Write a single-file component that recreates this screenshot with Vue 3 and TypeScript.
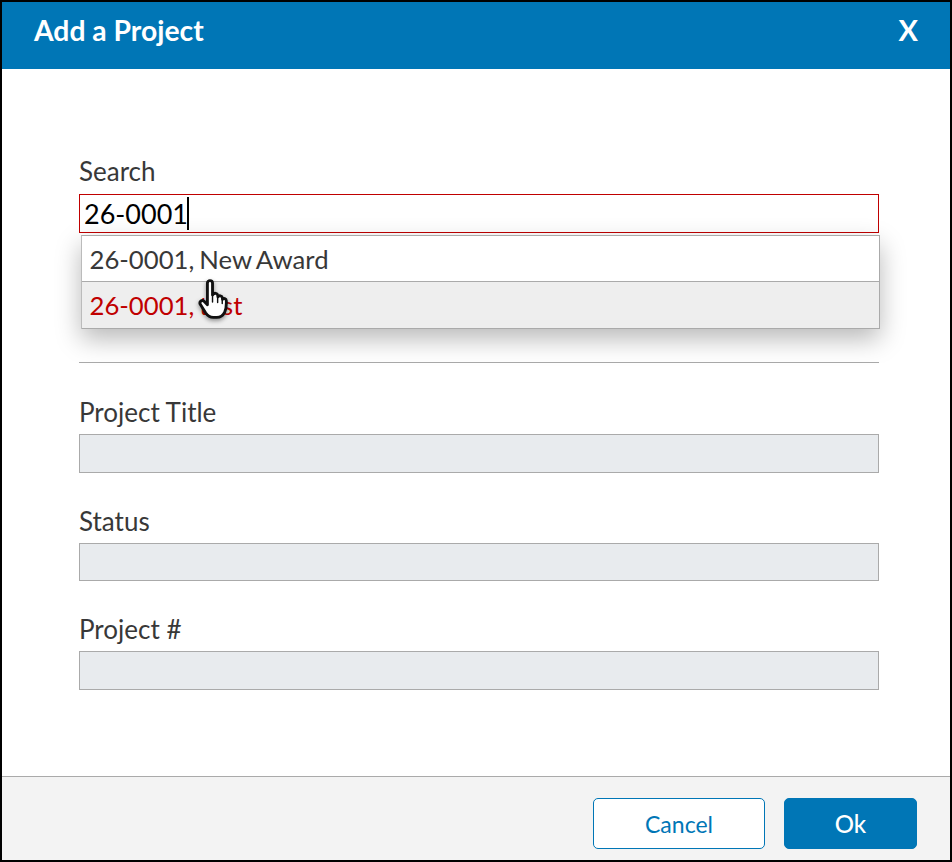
<script setup lang="ts">
const fields: string[] = ['Project Title', 'Status', 'Project #']
</script>

<template>
  <div class="dialog">
    <header class="head">
      <h1 class="title">Add a Project</h1>
      <span class="close">X</span>
    </header>
    <main class="body">
      <section class="search">
        <label class="label">Search</label>
        <div class="input">26-0001<span class="caret"></span></div>
        <ul class="menu">
          <li class="item">26-0001, New Award</li>
          <li class="item active">26-0001, test</li>
        </ul>
        <svg class="hand" viewBox="0 0 32 44" width="33" height="45">
          <path d="M12 5c0-3.200 5-3.200 5 0v11.500l.5-.5c1.200-1.700 4.300-1.200 4.600 1l.2 1.400c.9-1.600 4-1.200 4.300.9l.2 1.500c1-1.300 3.600-.7 3.700 1.400.2 4.300-.1 8.300-1.700 11.400-1.500 3-3.800 4.900-7.600 4.900h-3.500c-3.500 0-5.500-1.500-7.500-4.500l-5-8c-1.700-2.500 1.500-5.300 3.500-3.200l3.300 3.400z" fill="#fff" stroke="#111" stroke-width="2.800" stroke-linejoin="round" />
          <path d="M17 16.500v7M22 18v6M26.500 20v5" fill="none" stroke="#111" stroke-width="1.400" stroke-linecap="round" />
        </svg>
      </section>
      <hr class="rule" />
      <section v-for="f in fields" :key="f" class="field">
        <label class="label">{{ f }}</label>
        <div class="input disabled"></div>
      </section>
    </main>
    <footer class="foot">
      <button class="btn cancel" type="button">Cancel</button>
      <button class="btn ok" type="button">Ok</button>
    </footer>
  </div>
</template>

<style>
html, body { margin: 0; background: #fff; }
</style>

<style scoped>
.dialog {
  box-sizing: border-box;
  width: 952px;
  height: 862px;
  border: 2px solid #000;
  display: flex;
  flex-direction: column;
  font-family: Lato, "Open Sans", sans-serif;
  color: #383838;
  background: #fff;
}
.head {
  flex: none;
  box-sizing: border-box;
  height: 67px;
  background: #0076b6;
  color: #fff;
  display: flex;
  align-items: center;
  justify-content: space-between;
  padding: 0 32px 12px;
}
.title {
  margin: 0;
  font-size: 28.3px;
  font-weight: 700;
}
.close {
  font-size: 29px;
  font-weight: 700;
}
.body {
  flex: 1;
  padding: 86px 71px 0 77px;
}
.search {
  position: relative;
  height: 207px;
}
.label {
  display: block;
  height: 39px;
  font-size: 26px;
  line-height: 33px;
}
.field .label {
  line-height: 34px;
}
.input {
  box-sizing: border-box;
  height: 39px;
  border: 1px solid #c00000;
  background: #fff;
  color: #000;
  font-size: 27px;
  line-height: 39px;
  padding-left: 4px;
  display: flex;
  align-items: center;
}
.caret {
  width: 2px;
  height: 33px;
  margin-left: -1px;
  background: #000;
}
.menu {
  position: absolute;
  left: 2px;
  right: -1px;
  top: 80px;
  margin: 0;
  padding: 0;
  list-style: none;
  background: #fff;
  border-top: 1px solid #aaa;
  border-left: 1px solid #bbb;
  border-right: 1px solid #aaa;
  box-shadow: 0 10px 24px rgba(0, 0, 0, 0.28);
}
.item {
  box-sizing: border-box;
  height: 46px;
  padding-left: 7.5px;
  font-size: 25.7px;
  word-spacing: -1.5px;
  line-height: 46px;
  border-bottom: 1px solid #aaa;
}
.active {
  height: 47px;
  background: #eee;
  color: #c00000;
}
.hand {
  position: absolute;
  left: 116px;
  top: 123px;
  filter: drop-shadow(0 2px 2px rgba(0, 0, 0, 0.4));
}
.rule {
  margin: 0;
  border: 0;
  border-top: 1px solid #aaa;
}
.field {
  margin-top: 31px;
}
.rule + .field {
  margin-top: 32px;
}
.disabled {
  height: 38.6px;
  border-color: #aaa;
  background: #e8ebee;
}
.foot {
  flex: none;
  box-sizing: border-box;
  height: 84px;
  background: #f3f3f3;
  border-top: 1px solid #aaa;
  display: flex;
  justify-content: flex-end;
  align-items: flex-start;
  gap: 19px;
  padding: 21px 33px 0 0;
}
.btn {
  box-sizing: border-box;
  height: 51px;
  border-radius: 5px;
  border: 1px solid #0076b6;
  font-family: inherit;
  cursor: pointer;
}
.cancel {
  width: 172px;
  background: #fff;
  color: #0076b6;
  font-size: 23px;
}
.ok {
  width: 133px;
  background: #0076b6;
  color: #fff;
  font-size: 24px;
  font-weight: 500;
}
</style>
